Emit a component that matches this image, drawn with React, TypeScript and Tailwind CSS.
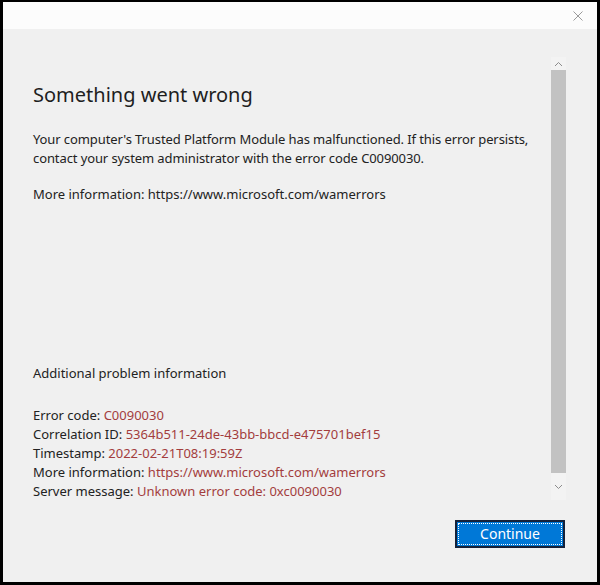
import React from 'react';

const font = { fontFamily: '"Segoe UI", "Noto Sans", sans-serif' };

const Field: React.FC<{ label: string; value: string }> = ({ label, value }) => (
  <div>
    {label} <span className="text-[#a33d3d]">{value}</span>
  </div>
);

const Chevron: React.FC<{ up?: boolean }> = ({ up }) => (
  <svg width="9" height="6" viewBox="0 0 9 6" className="text-[#8c8c8c]">
    <path d={up ? 'M1 5 L4.5 1.5 L8 5' : 'M1 1 L4.5 4.5 L8 1'} fill="none" stroke="currentColor" strokeWidth="1" />
  </svg>
);

export default function App() {
  return (
    <div className="w-[600px] h-[585px] bg-black pt-[2px] pl-[3px] pr-[3px] pb-[3px]" style={font}>
      <div className="flex flex-col h-full bg-[#f0f0f0]">
        {/* title bar */}
        <div className="h-[27px] bg-[#fcfcfc] flex items-center justify-end pr-[14px]">
          <svg width="10" height="10" viewBox="0 0 10 10">
            <path d="M0.5 0.5 L9.5 9.5 M9.5 0.5 L0.5 9.5" stroke="#9a9a9a" strokeWidth="1" />
          </svg>
        </div>

        <div className="flex flex-1 min-h-0 pt-[28px] pl-[30px] pr-[31px]">
          <div className="flex-1 text-[13px] leading-[18.5px] text-[#222] whitespace-nowrap">
            <h1 className="mt-[23px] text-[20px] leading-[30px] font-normal text-[#1e1e1e]">Something went wrong</h1>
            <p className="mt-[20px] tracking-[-0.1px]">
              Your computer's Trusted Platform Module has malfunctioned. If this error persists,
              <br />
              contact your system administrator with the error code C0090030.
            </p>
            <p className="mt-[18px]">More information: https://www.microsoft.com/wamerrors</p>
            <p className="mt-[160px]">Additional problem information</p>
            <div className="mt-[24px] leading-[19px]">
              <Field label="Error code:" value="C0090030" />
              <Field label="Correlation ID:" value="5364b511-24de-43bb-bbcd-e475701bef15" />
              <Field label="Timestamp:" value="2022-02-21T08:19:59Z" />
              <Field label="More information:" value="https://www.microsoft.com/wamerrors" />
              <Field label="Server message:" value="Unknown error code: 0xc0090030" />
            </div>
          </div>

          {/* scrollbar */}
          <div className="w-[15px] h-[443px] flex flex-col bg-[#f3f3f3]">
            <div className="h-[13px] flex items-center justify-center">
              <Chevron up />
            </div>
            <div className="h-[403px] bg-[#c2c2c2]" />
            <div className="flex-1 flex items-center justify-center">
              <Chevron />
            </div>
          </div>
        </div>

        <div className="flex justify-end pr-[32px] pb-[34px]">
          <button className="w-[110px] h-[28px] bg-[#0078d7] border-2 border-[#14213a] p-[1px]">
            <span className="flex items-center justify-center h-full border border-dotted border-white text-white text-[14px] leading-none">
              Continue
            </span>
          </button>
        </div>
      </div>
    </div>
  );
}
